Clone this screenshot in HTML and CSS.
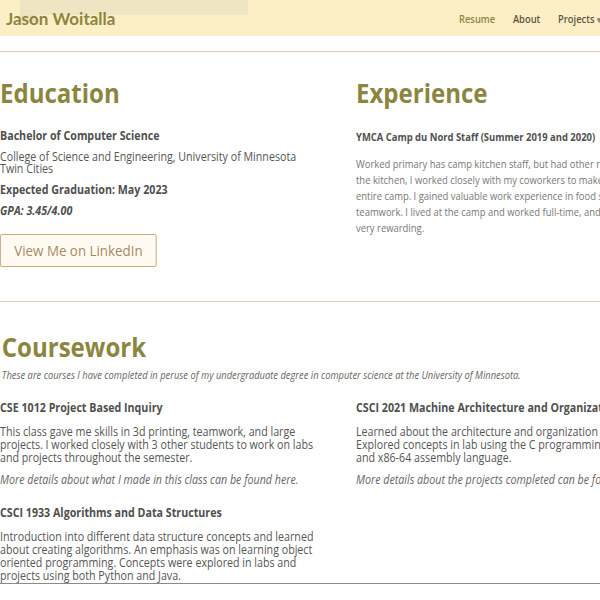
FILE: index.html
```html
<!DOCTYPE html>
<html>
<head>
<meta charset="utf-8">
<link rel="stylesheet" href="styles.css">
</head>
<body>
<header class="topbar">
  <div class="logo">Jason Woitalla</div>
  <nav class="nav">
    <a class="nav-link active">Resume</a>
    <a class="nav-link">About</a>
    <a class="nav-link">Projects <span class="caret">▾</span></a>
  </nav>
</header>
<hr class="rule-top">
<main class="page">
  <section class="two-col">
    <div class="col">
      <h1 class="section-title">Education</h1>
      <h4 class="item-title">Bachelor of Computer Science</h4>
      <p class="school">College of Science and Engineering, University of Minnesota Twin Cities</p>
      <h4 class="item-title">Expected Graduation: May 2023</h4>
      <h4 class="item-title gpa">GPA: 3.45/4.00</h4>
      <a class="btn">View Me on LinkedIn</a>
    </div>
    <div class="col">
      <h1 class="section-title">Experience</h1>
      <h5 class="job-title">YMCA Camp du Nord Staff (Summer 2019 and 2020)</h5>
      <p class="job-text">Worked primary has camp kitchen staff, but had other roles around camp. In the kitchen, I worked closely with my coworkers to make meals for the<br>entire camp. I gained valuable work experience in food service and teamwork. I lived at the camp and worked full-time, and the experience was very rewarding.</p>
    </div>
  </section>
  <hr class="rule-mid">
  <section class="coursework">
    <h1 class="section-title cw-title">Coursework</h1>
    <p class="cw-sub">These are courses I have completed in peruse of my undergraduate degree in computer science at the University of Minnesota.</p>
    <div class="course-grid">
      <div class="col">
        <div class="course">
          <h4 class="course-title">CSE 1012 Project Based Inquiry</h4>
          <p class="course-text">This class gave me skills in 3d printing, teamwork, and large projects. I worked closely with 3 other students to work on labs and projects throughout the semester.</p>
          <p class="course-more">More details about what I made in this class can be found here.</p>
        </div>
        <div class="course">
          <h4 class="course-title">CSCI 1933 Algorithms and Data Structures</h4>
          <p class="course-text">Introduction into different data structure concepts and learned about creating algorithms. An emphasis was on learning object oriented programming. Concepts were explored in labs and projects using both Python and Java.</p>
        </div>
      </div>
      <div class="col col-right">
        <div class="course">
          <h4 class="course-title">CSCI 2021 Machine Architecture and Organization</h4>
          <p class="course-text">Learned about the architecture and organization of computers.<br>Explored concepts in lab using the C programming language<br>and x86-64 assembly language.</p>
          <p class="course-more">More details about the projects completed can be found here.</p>
        </div>
      </div>
    </div>
  </section>
</main>
</body>
</html>
```
FILE: styles.css
```css
html, body {
  margin: 0;
  padding: 0;
  overflow: hidden;
  background: #ffffff;
}
body {
  font-family: "Open Sans", "Liberation Sans", sans-serif;
  color: #555555;
  width: 600px;
}
.topbar {
  height: 36px;
  background-color: #fcefc6;
  background-image:
    linear-gradient(#f0e5c2, #f0e5c2),
    linear-gradient(#ece0bc, #ece0bc);
  background-size: 228px 15px, 16px 22px;
  background-position: 20px 0, 20px 0;
  background-repeat: no-repeat;
  display: flex;
  align-items: center;
  width: 600px;
}
.logo {
  font-family: Lato, "Open Sans", sans-serif;
  font-weight: 700;
  font-size: 17px;
  color: #8c8540;
  padding-left: 6px;
  padding-top: 1px;
  white-space: nowrap;
  flex-shrink: 0;
  width: 108px;
}
.nav {
  margin-left: 345px;
  flex-shrink: 0;
  display: flex;
  gap: 20px;
  padding-top: 1px;
  white-space: nowrap;
  transform: scaleX(0.89);
  transform-origin: 0 50%;
}
.nav-link {
  font-size: 10.5px;
  font-weight: 600;
  color: #5f5444;
}
.nav-link.active {
  color: #8c8540;
}
.caret {
  font-size: 9px;
  color: #8a8070;
}
.rule-top {
  margin: 15px 0 0;
  border: 0;
  border-top: 1px solid #e2cbb6;
}
.page {
  width: 800px;
  transform: scaleX(0.89);
  transform-origin: 0 0;
}
.two-col {
  display: grid;
  grid-template-columns: 400px 400px;
}
.col {
  width: 360px;
}
.col-right {
  width: 400px;
}
.section-title {
  font-size: 27px;
  font-weight: 700;
  color: #8c8540;
  margin: 24px 0 0;
  line-height: 34px;
}
.item-title {
  font-size: 12px;
  font-weight: 700;
  color: #4f4f4f;
  margin: 0;
  line-height: 16px;
}
.col > .item-title:first-of-type {
  margin-top: 18px;
}
.school {
  font-size: 12px;
  line-height: 12px;
  margin: 7px 0 7px;
  color: #555;
}
.item-title + .item-title {
  margin-top: 5px;
}
.gpa {
  font-style: italic;
}
.btn {
  display: inline-block;
  margin-top: 15px;
  padding: 7px 15px 7px 15px;
  border: 1px solid #c9a676;
  border-radius: 2px;
  background: #fffbf3;
  color: #a58a5e;
  font-size: 15px;
  line-height: 17px;
}
.job-title {
  font-size: 10.6px;
  font-weight: 700;
  color: #4f4f4f;
  margin: 20px 0 0;
  line-height: 14px;
}
.job-text {
  font-size: 10.6px;
  line-height: 16px;
  color: #777;
  margin: 12px 0 0;
  width: 383px;
}
.rule-mid {
  margin: 34px 0 0;
  border: 0;
  border-top: 1px solid #f0c9a4;
  width: 800px;
}
.coursework {
  border-bottom: 1px solid #8a8a8a;
  padding-bottom: 1px;
}
.cw-title {
  margin-top: 28px;
  padding-left: 2px;
}
.cw-sub {
  font-size: 10.5px;
  font-style: italic;
  color: #666;
  margin: 4px 0 0;
  line-height: 14px;
  padding-left: 2px;
}
.course-grid {
  display: grid;
  grid-template-columns: 400px 400px;
  margin-top: 18px;
}
.course + .course {
  margin-top: 17px;
}
.course-title {
  font-size: 12px;
  font-weight: 700;
  color: #4f4f4f;
  margin: 0;
  line-height: 16px;
}
.course-text {
  font-size: 12px;
  line-height: 13px;
  margin: 9px 0 0;
  color: #555;
}
.course-more {
  font-size: 12px;
  font-style: italic;
  line-height: 16px;
  margin: 8px 0 0;
  color: #666;
}
```
